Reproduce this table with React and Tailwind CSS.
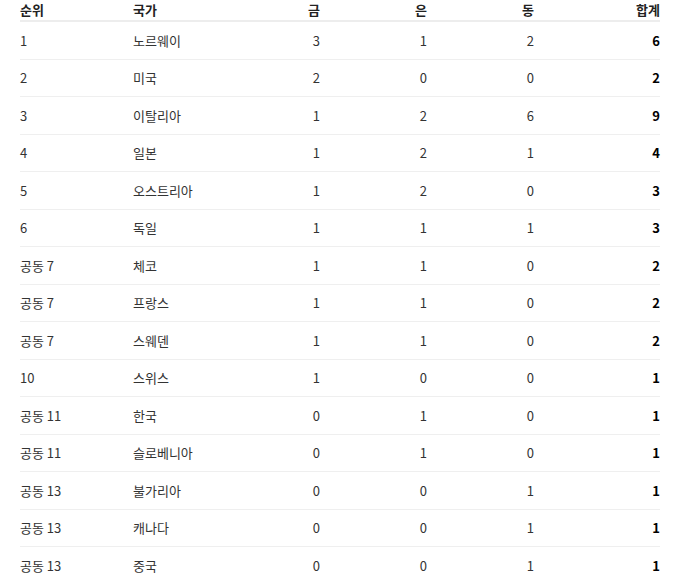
const rows = [
  ['1', '노르웨이', 3, 1, 2, 6],
  ['2', '미국', 2, 0, 0, 2],
  ['3', '이탈리아', 1, 2, 6, 9],
  ['4', '일본', 1, 2, 1, 4],
  ['5', '오스트리아', 1, 2, 0, 3],
  ['6', '독일', 1, 1, 1, 3],
  ['공동 7', '체코', 1, 1, 0, 2],
  ['공동 7', '프랑스', 1, 1, 0, 2],
  ['공동 7', '스웨덴', 1, 1, 0, 2],
  ['10', '스위스', 1, 0, 0, 1],
  ['공동 11', '한국', 0, 1, 0, 1],
  ['공동 11', '슬로베니아', 0, 1, 0, 1],
  ['공동 13', '불가리아', 0, 0, 1, 1],
  ['공동 13', '캐나다', 0, 0, 1, 1],
  ['공동 13', '중국', 0, 0, 1, 1],
];

const cols = 'grid grid-cols-[113px_80px_107px_107px_107px_126px] items-center';

export default function App() {
  return (
    <div className="min-h-screen bg-white px-5 text-[13px] text-[#333] font-['Noto_Sans_CJK_KR','Noto_Sans',sans-serif]">
      {/* header */}
      <div className={`${cols} h-[22px] border-b-2 border-[#ededed] font-semibold text-[#222]`}>
        <div>순위</div>
        <div>국가</div>
        <div className="text-right">금</div>
        <div className="text-right">은</div>
        <div className="text-right">동</div>
        <div className="text-right">합계</div>
      </div>

      {rows.map((r, i) => (
        <div key={i} className={`${cols} h-[37.5px] border-b border-[#efefef] last:border-b-0`}>
          <div>{r[0]}</div>
          <div>{r[1]}</div>
          <div className="text-right">{r[2]}</div>
          <div className="text-right">{r[3]}</div>
          <div className="text-right">{r[4]}</div>
          <div className="text-right font-bold text-black">{r[5]}</div>
        </div>
      ))}
    </div>
  );
}
